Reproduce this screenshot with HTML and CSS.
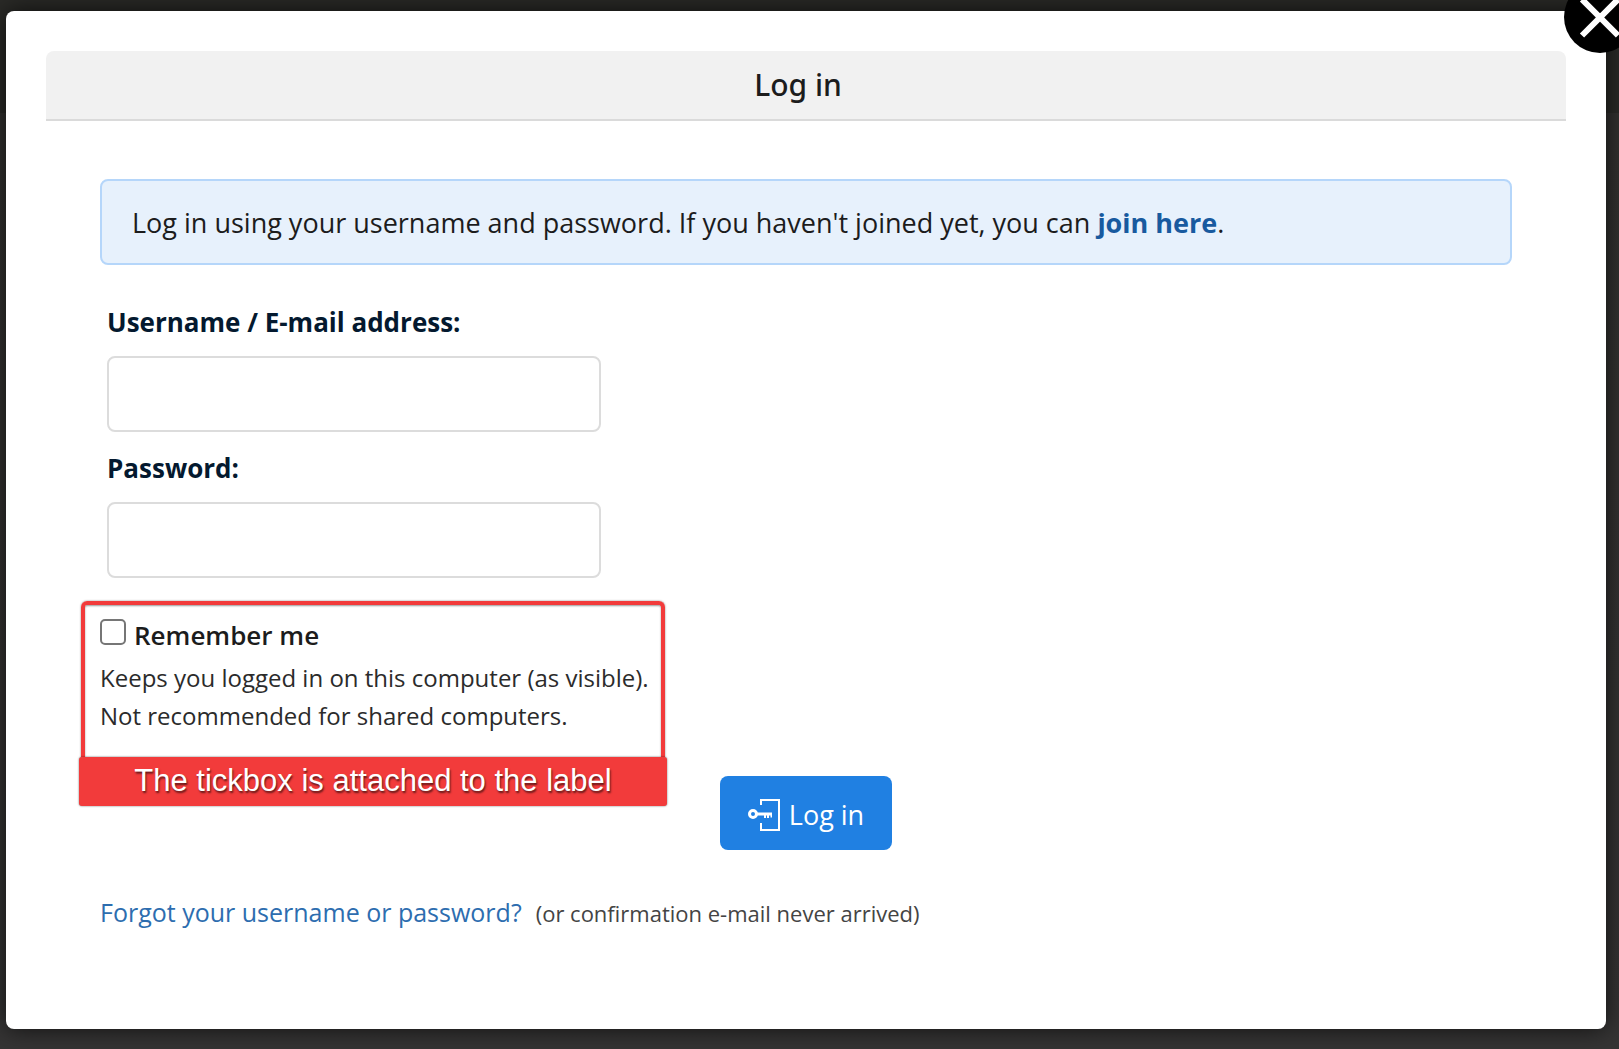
FILE: index.html
```html
<!DOCTYPE html>
<html lang="en">
<head>
<meta charset="utf-8">
<meta name="viewport" content="width=device-width, initial-scale=1">
<title>Log in</title>
<link rel="stylesheet" href="styles.css">
</head>
<body>
<main class="dialog" role="dialog" aria-labelledby="dialog-title">
  <button class="close" type="button" aria-label="Close">
    <svg viewBox="0 0 72 72" aria-hidden="true"><path d="M18 18.500 54 54.500M54 18.500 18 54.500"/></svg>
  </button>
  <h1 class="dialog-title" id="dialog-title">Log in</h1>
  <form class="content">
    <p class="info">Log in using your username and password. If you haven't joined yet, you can <a href="#join">join here</a>.</p>
    <div class="fields">
      <div class="field">
        <label for="username">Username / E-mail address:</label>
        <input id="username" type="text" autocomplete="username">
      </div>
      <div class="field">
        <label for="password">Password:</label>
        <input id="password" type="password" autocomplete="current-password">
      </div>
    </div>
    <div class="remember">
      <div class="remember-row">
        <input id="remember" type="checkbox">
        <label for="remember">Remember me</label>
      </div>
      <p class="remember-help">Keeps you logged in on this computer (as visible).<br>Not recommended for shared computers.</p>
      <div class="callout"><p class="callout-text">The tickbox is attached to the label</p></div>
    </div>
    <button class="submit" type="submit">
      <svg viewBox="0 0 32 32" aria-hidden="true">
        <path class="door" d="M13 6V1H31V31H13V24"/>
        <circle class="ring" cx="5" cy="15" r="3.500"/>
        <path class="key" d="M9 13.500H24V18.500H22.500V16.500H21V19H19V16.500H18V19H16V16.500H9Z"/>
      </svg>
      Log in
    </button>
    <p class="recover"><a href="#recover">Forgot your username or password?</a> <span>(or confirmation e-mail never arrived)</span></p>
  </form>
</main>
</body>
</html>
```
FILE: styles.css
```css
* {
  box-sizing: border-box;
}

body {
  margin: 0;
  min-height: 100vh;
  padding: 11px 13px 20px 6px;
  overflow-x: hidden;
  background: linear-gradient(#2a2a27 113px, #32312f 113px, #353434);
  color: #1c1c1c;
  font: 27px/38px "Open Sans", "Noto Sans", sans-serif;
}

h1,
p {
  margin: 0;
}

.dialog {
  position: relative;
  padding: 40px;
  border-radius: 8px;
  background: #fff;
  box-shadow: 0 0 24px rgba(0, 0, 0, 0.7);
}

.close {
  position: absolute;
  top: -30px;
  right: -30px;
  width: 72px;
  height: 72px;
  padding: 0;
  border: 0;
  border-radius: 50%;
  background: #000;
}

.close svg {
  display: block;
  stroke: #fff;
  stroke-width: 6;
}

.dialog-title {
  padding: 14px 16px 14px 0;
  border-bottom: 2px solid #dadada;
  border-radius: 8px 8px 0 0;
  background: #f1f1f1;
  font-family: "Noto Sans", "Open Sans", sans-serif;
  font-size: 30px;
  font-weight: 500;
  line-height: 40px;
  text-align: center;
}

.content {
  padding: 58px 54px 57px;
}

.info {
  padding: 23px 30px 21px;
  border: 2px solid #b5d6fa;
  border-radius: 8px;
  background: #e7f1fc;
}

.info a {
  color: #185a9f;
  font-weight: 700;
  text-decoration: none;
}

.fields {
  display: grid;
  gap: 17px;
  max-width: 501px;
  margin-top: 38px;
  padding-left: 7px;
}

.field {
  display: grid;
  gap: 15px;
}

.field label {
  color: #04192f;
  font-size: 26px;
  font-weight: 700;
}

.field input {
  width: 100%;
  height: 76px;
  padding: 0 16px;
  border: 2px solid #dcdcdc;
  border-radius: 8px;
  background: #fff;
  font: inherit;
}

.remember {
  position: relative;
  max-width: 552px;
  margin-top: 38px;
}

.remember-row {
  display: flex;
  align-items: flex-start;
  gap: 8px;
  margin-bottom: 5px;
  font-size: 26px;
  font-weight: 600;
}

.remember-row input {
  appearance: none;
  flex: none;
  width: 26px;
  height: 26px;
  margin: 3px 0 0;
  border: 2px solid #767676;
  border-radius: 5px;
  background: #fff;
}

.remember-row input:checked {
  background: #2080e2;
}

.remember-help {
  color: #2b2b2b;
  font-size: 24px;
}

.callout {
  position: absolute;
  inset: -15px -13px -22px -19px;
  border: 4px solid #f23b3b;
  border-bottom: 0;
  border-radius: 6px 6px 0 0;
  box-shadow: 0 0 2px rgba(0, 0, 0, 0.5), inset 0 1px 2px rgba(0, 0, 0, 0.4);
  pointer-events: none;
}

.callout-text {
  position: absolute;
  top: 100%;
  right: -6px;
  left: -6px;
  padding: 5px 0 6px;
  border-radius: 3px;
  background: #f23b3b;
  box-shadow: 0 0 2px rgba(0, 0, 0, 0.6);
  color: #fff;
  font-family: "Liberation Sans", Arial, sans-serif;
  font-size: 31px;
  text-align: center;
  text-shadow: 1px 2px 2px rgba(0, 0, 0, 0.6);
}

.submit {
  display: flex;
  align-items: center;
  justify-content: center;
  gap: 9px;
  min-width: 172px;
  margin: 41px auto 43px;
  padding: 20px 26px 16px;
  border: 0;
  border-radius: 8px;
  background: #2080e2;
  color: #fff;
  font: inherit;
}

.submit svg {
  width: 32px;
  height: 32px;
  fill: none;
  stroke: #fff;
}

.submit .door {
  stroke-width: 2;
}

.submit .ring {
  stroke-width: 3;
}

.submit .key {
  fill: #fff;
  stroke: none;
}

.recover {
  display: flex;
  flex-wrap: wrap;
  align-items: baseline;
  gap: 14px;
  font-size: 25px;
}

.recover a {
  color: #2d6daf;
  text-decoration: none;
}

.recover span {
  color: #444;
  font-size: 22px;
}
```
